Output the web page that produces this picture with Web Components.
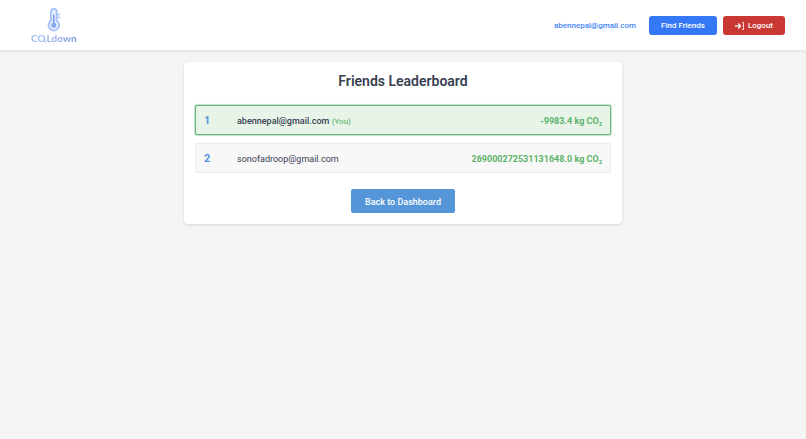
<!DOCTYPE html>
<html lang="en">
<head>
<meta charset="utf-8">
<meta name="viewport" content="width=device-width, initial-scale=1">
<title>Friends Leaderboard</title>
<style>
  body {
    margin: 0;
    min-height: 100vh;
    background-color: #f4f4f4;
    color: #374151;
    font-family: Roboto, "Liberation Sans", sans-serif;
    font-size: 9px;
    line-height: 14px;
  }
  main {
    padding: 11px;
  }
</style>
</head>
<body>
<site-header>
  <brand-logo slot="brand"></brand-logo>
  <nav-link href="#profile">abennepal@gmail.com</nav-link>
  <action-button variant="primary">Find Friends</action-button>
  <action-button variant="danger">
    <logout-icon slot="icon"></logout-icon>Logout
  </action-button>
</site-header>
<main>
  <leaderboard-card>
    <span slot="title">Friends Leaderboard</span>
    <leaderboard-row rank="1" score="-9983.4" current>abennepal@gmail.com</leaderboard-row>
    <leaderboard-row rank="2" score="269000272531131648.0">sonofadroop@gmail.com</leaderboard-row>
    <action-button slot="footer" variant="back">Back to Dashboard</action-button>
  </leaderboard-card>
</main>

<script>
const createTemplate = (html) => {
  const template = document.createElement("template");
  template.innerHTML = html;
  return template;
};

class BaseElement extends HTMLElement {
  constructor() {
    super();
    this.attachShadow({ mode: "open" });
    this.shadowRoot.appendChild(this.constructor.template.content.cloneNode(true));
  }
}

class SiteHeader extends BaseElement {
  static template = createTemplate(`
    <style>
      :host {
        display: block;
      }
      header {
        display: flex;
        align-items: center;
        justify-content: space-between;
        box-sizing: border-box;
        min-height: 51px;
        padding: 0 21px;
        background-color: white;
        border-bottom: 1px solid #e8e8e8;
        box-shadow: 0 1px 2px rgb(0 0 0 / 6%);
      }
      nav {
        display: flex;
        align-items: center;
        gap: 6px;
      }
    </style>
    <header>
      <slot name="brand"></slot>
      <nav><slot></slot></nav>
    </header>
  `);
}

class BrandLogo extends BaseElement {
  static template = createTemplate(`
    <style>
      :host {
        display: block;
        padding: 2px 10px 0;
      }
      a {
        display: flex;
        flex-direction: column;
        align-items: center;
        color: #8eabe8;
        font-family: Lato, sans-serif;
        font-size: 10px;
        line-height: 12px;
        text-decoration: none;
      }
      .name {
        display: flex;
        background: linear-gradient(90deg, #9dbaf5 20%, #7b97d6);
        background-clip: text;
        color: transparent;
        font-weight: 700;
      }
      svg {
        display: block;
      }
      .wave {
        margin-left: -3px;
      }
    </style>
    <a href="#home" aria-label="COLdown">
      <svg width="16" height="24" viewBox="0 0 16 24" fill="none" stroke="#a3c0f8" stroke-width="1.8" stroke-linecap="round">
        <path d="M4.9 12.8V3.8a2.9 2.9 0 0 1 5.8 0v9a5.3 5.3 0 1 1-5.8 0Z" fill="#e6eefe"/>
        <path d="M7.8 7v10" stroke="#7da0ee" stroke-width="1.6"/>
        <circle cx="7.8" cy="17.3" r="2.5" fill="#84a6f0" stroke="none"/>
        <path d="M12 6.5h1.4M12 9.5h1.8" stroke-width="1.4"/>
      </svg>
      <span class="name">CO<svg class="wave" width="4" height="12" viewBox="0 0 4 12" fill="none" stroke="#9ab7f3"><path d="M.3 7.2C2 7.4 2.6 8.8 2.2 11"/></svg>Ldown</span>
    </a>
  `);
}

class NavLink extends BaseElement {
  static template = createTemplate(`
    <style>
      :host {
        display: block;
        margin-right: 7px;
      }
      a {
        color: #4285f4;
        font-size: 8px;
        font-weight: 500;
        text-decoration: none;
      }
    </style>
    <a><slot></slot></a>
  `);

  connectedCallback() {
    this.shadowRoot.querySelector("a").href = this.getAttribute("href");
  }
}

class ActionButton extends BaseElement {
  static template = createTemplate(`
    <style>
      :host {
        display: block;
      }
      button {
        display: flex;
        align-items: center;
        justify-content: center;
        gap: 4px;
        box-sizing: border-box;
        height: 19px;
        padding: 1px 12px 0;
        border: none;
        border-radius: 3px;
        background-color: #3478f6;
        color: white;
        font: inherit;
        font-size: 8px;
        font-weight: 500;
        white-space: nowrap;
        cursor: pointer;
      }
      :host([variant="danger"]) button {
        background-color: #c93832;
      }
      :host([variant="back"]) button {
        height: 24px;
        padding: 1px 14px 0;
        border-radius: 2px;
        background-color: #5596d8;
        font-size: 9px;
      }
    </style>
    <button type="button"><slot name="icon"></slot><span><slot></slot></span></button>
  `);
}

class LogoutIcon extends BaseElement {
  static template = createTemplate(`
    <style>
      :host,
      svg {
        display: block;
      }
    </style>
    <svg width="9" height="8" viewBox="0 0 9 8" fill="none" stroke="currentColor" aria-hidden="true">
      <path d="M0 4h5.2" stroke-width="1.3"/>
      <path d="M3.2 1.5 5.7 4 3.2 6.5" stroke-width="1.2"/>
      <path d="M7 .5h1.5v7H7" stroke-width=".8"/>
    </svg>
  `);
}

class LeaderboardCard extends BaseElement {
  static template = createTemplate(`
    <style>
      :host {
        display: block;
        box-sizing: border-box;
        max-width: 438px;
        margin: 0 auto;
        padding: 11px;
        border-radius: 4px;
        background-color: white;
        box-shadow: 0 1px 3px rgb(0 0 0 / 12%);
      }
      h1 {
        margin: 0 0 16px;
        font-size: 14px;
        font-weight: 600;
        line-height: 16px;
        text-align: center;
      }
      .rows {
        display: flex;
        flex-direction: column;
        gap: 8px;
      }
      footer {
        display: flex;
        justify-content: center;
        margin-top: 16px;
      }
    </style>
    <h1><slot name="title"></slot></h1>
    <div class="rows" role="list"><slot></slot></div>
    <footer><slot name="footer"></slot></footer>
  `);
}

class LeaderboardRow extends BaseElement {
  static template = createTemplate(`
    <style>
      :host {
        display: grid;
        grid-template-columns: 25px 1fr auto;
        align-items: center;
        column-gap: 8px;
        box-sizing: border-box;
        min-height: 30px;
        padding: 2px 8px 0;
        border: 1px solid #ebebeb;
        border-radius: 2px;
        background-color: #f8f8f8;
      }
      :host([current]) {
        border-color: #6ab77e;
        background-color: #e9f4e9;
        box-shadow: 0 0 1px 1px rgb(106 183 126 / 40%);
      }
      .rank {
        color: #5596d8;
        font-size: 11px;
        font-weight: 700;
      }
      .you {
        color: #62b874;
        font-size: 8px;
        font-weight: 500;
      }
      :host([current]) .name {
        font-weight: 500;
      }
      .score {
        color: #5db36b;
        font-weight: 700;
      }
    </style>
    <span class="rank"></span>
    <span class="name"><slot></slot> <span class="you" hidden>(You)</span></span>
    <span class="score"><span class="value"></span> kg CO₂</span>
  `);

  connectedCallback() {
    this.setAttribute("role", "listitem");
    this.shadowRoot.querySelector(".rank").textContent = this.getAttribute("rank");
    this.shadowRoot.querySelector(".value").textContent = this.getAttribute("score");
    this.shadowRoot.querySelector(".you").hidden = !this.hasAttribute("current");
  }
}

customElements.define("site-header", SiteHeader);
customElements.define("brand-logo", BrandLogo);
customElements.define("nav-link", NavLink);
customElements.define("action-button", ActionButton);
customElements.define("logout-icon", LogoutIcon);
customElements.define("leaderboard-card", LeaderboardCard);
customElements.define("leaderboard-row", LeaderboardRow);
</script>
</body>
</html>
